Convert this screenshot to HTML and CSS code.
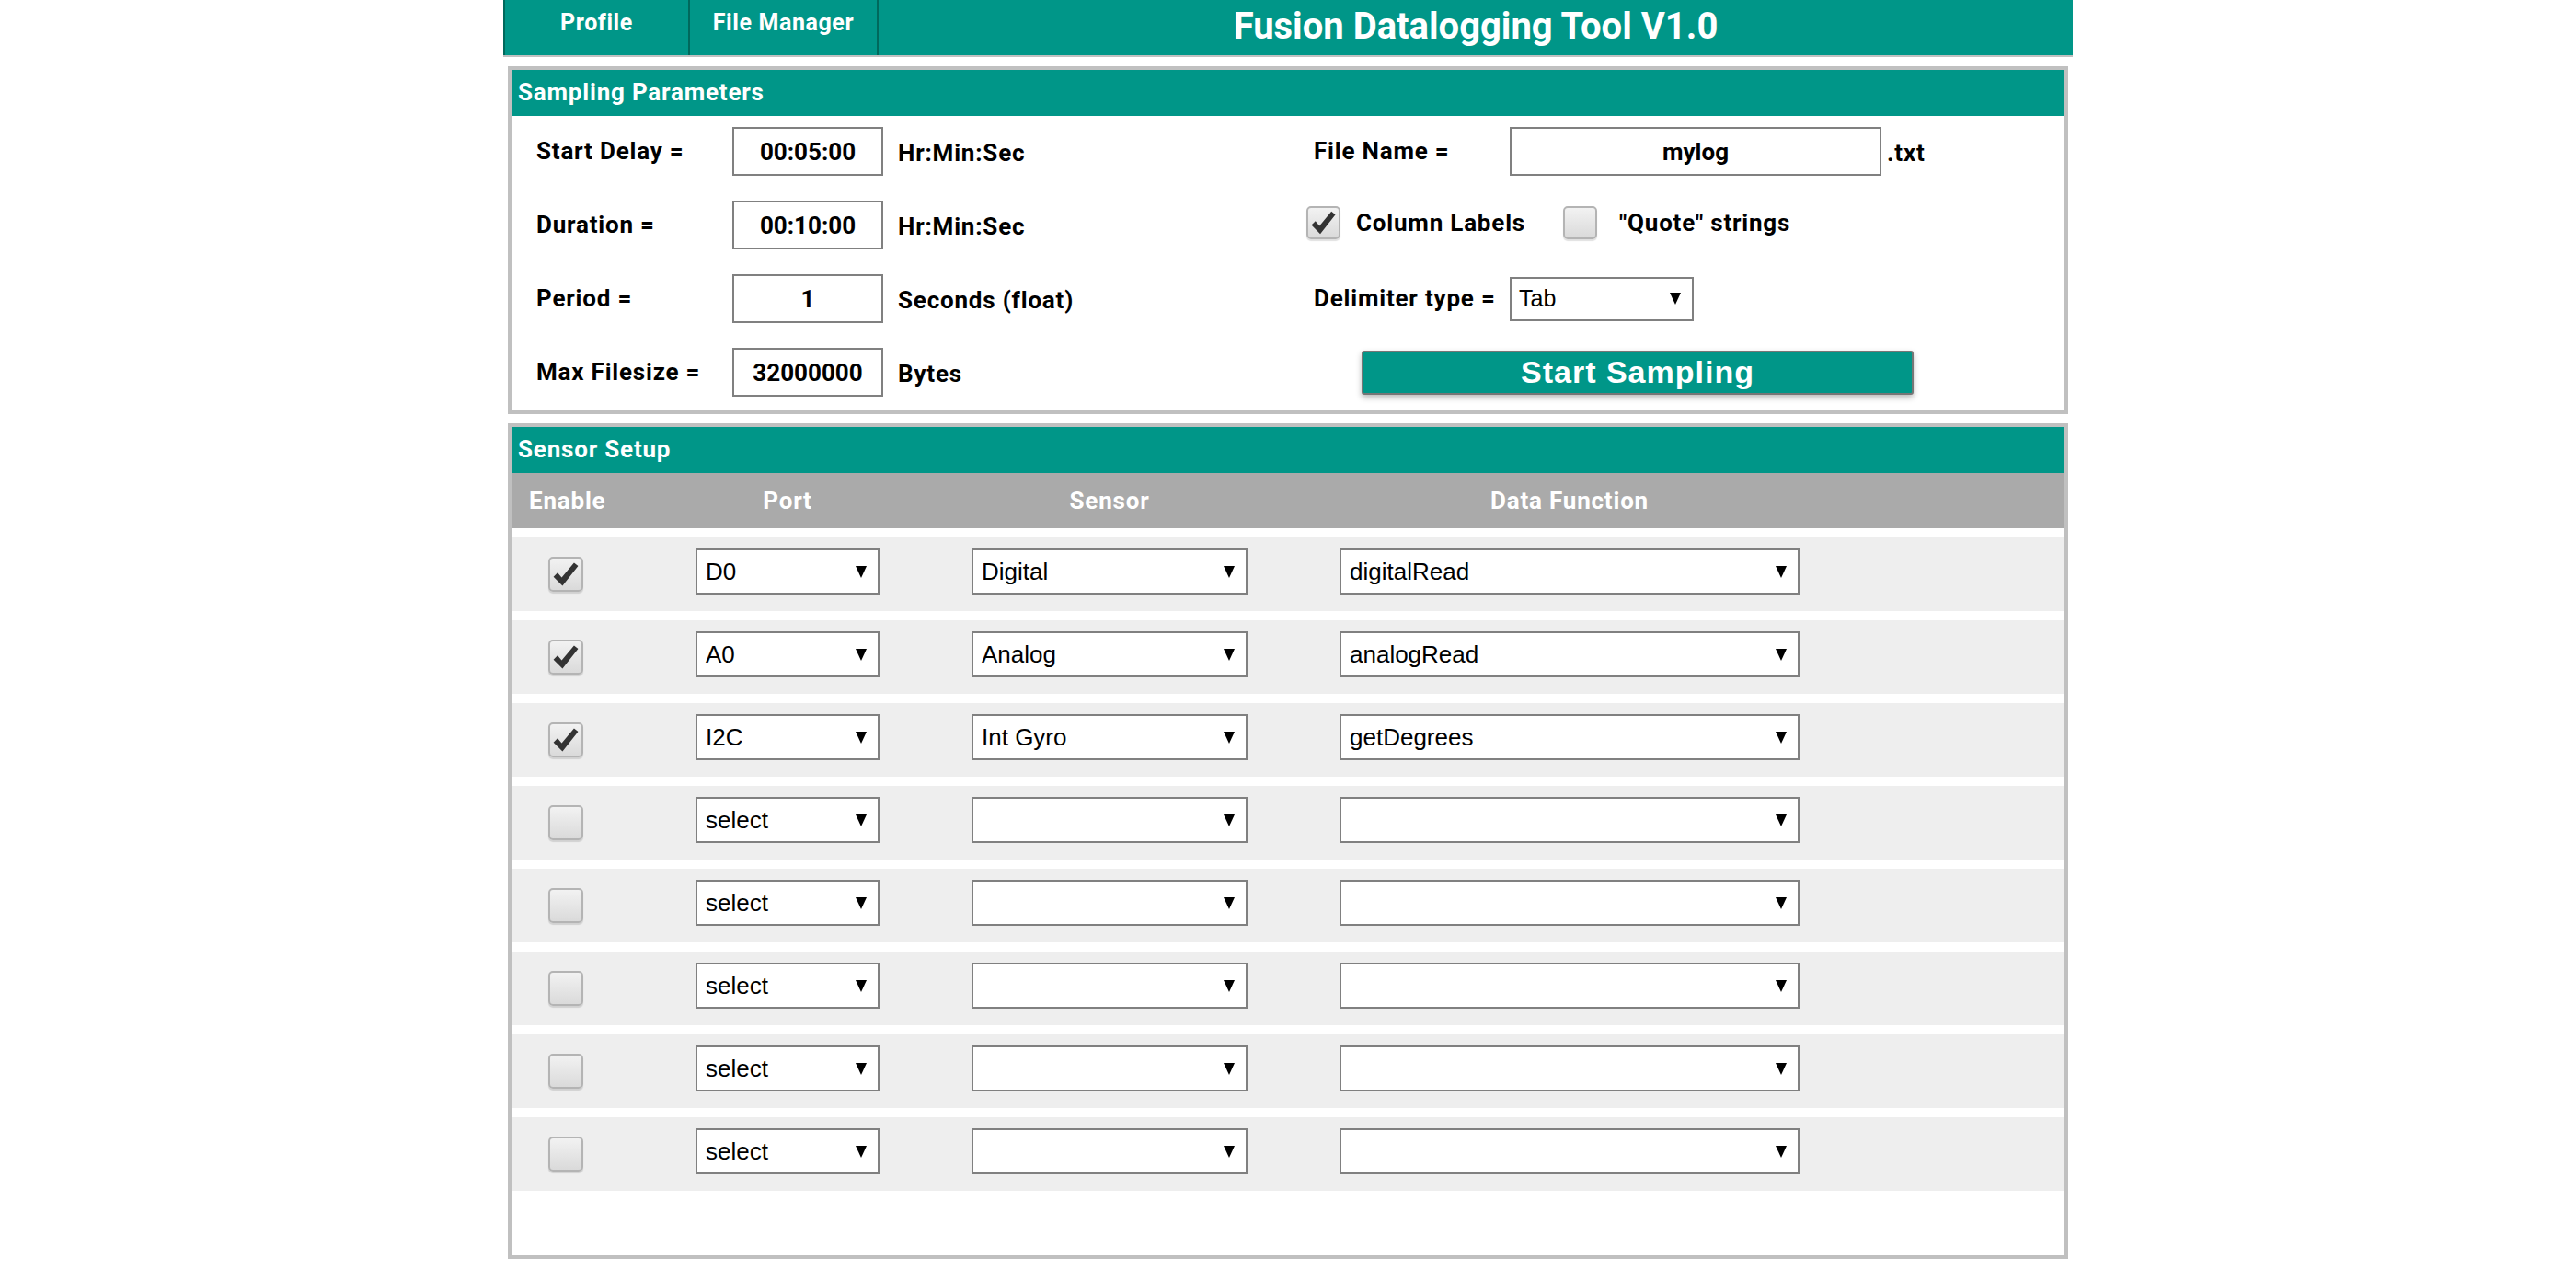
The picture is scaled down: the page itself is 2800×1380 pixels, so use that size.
FILE: index.html
```html
<!DOCTYPE html>
<html lang="en">
<head>
<meta charset="utf-8">
<title>Fusion Datalogging Tool V1.0</title>
<link rel="stylesheet" href="styles.css">
</head>
<body>
<div class="app">
  <header class="topbar">
    <div class="tab tab-first">Profile</div>
    <div class="tab tab-second">File Manager</div>
    <h1 class="title">Fusion Datalogging Tool V1.0</h1>
  </header>

  <section class="panel">
    <h2 class="panel-title">Sampling Parameters</h2>
    <div class="params">
      <div class="field"><span class="lbl">Start Delay =</span><input class="inp" value="00:05:00" readonly><span class="unit">Hr:Min:Sec</span></div>
      <div class="field"><span class="lbl">File Name =</span><input class="inp inp-file" value="mylog" readonly><span class="ext">.txt</span></div>

      <div class="field"><span class="lbl">Duration =</span><input class="inp" value="00:10:00" readonly><span class="unit">Hr:Min:Sec</span></div>
      <div class="field field-checks">
        <span class="cb cb-sm checked"><svg viewBox="0 0 38 38"><path d="M4 22 L9 17 L14 23 L29 5 L34 9 L15 33 Z"/></svg></span>
        <span class="check-lbl">Column Labels</span>
        <span class="cb cb-sm cb-quote"></span>
        <span class="check-lbl check-quote">"Quote" strings</span>
      </div>

      <div class="field"><span class="lbl">Period =</span><input class="inp" value="1" readonly><span class="unit">Seconds (float)</span></div>
      <div class="field"><span class="lbl">Delimiter type =</span><div class="sel sel-delim"><span>Tab</span><svg class="arr" viewBox="0 0 12 13"><path d="M0 0 H12 L6 13 Z"/></svg></div></div>

      <div class="field"><span class="lbl">Max Filesize =</span><input class="inp" value="32000000" readonly><span class="unit">Bytes</span></div>
      <div class="field"><button class="start-btn" type="button">Start Sampling</button></div>
    </div>
  </section>

  <section class="panel">
    <h2 class="panel-title">Sensor Setup</h2>
    <div class="col-head">
      <span class="hd hd-enable">Enable</span>
      <span class="hd">Port</span>
      <span class="hd">Sensor</span>
      <span class="hd">Data Function</span>
    </div>
    <div class="rows">
      <div class="srow">
        <span class="cb checked"><svg viewBox="0 0 38 38"><path d="M4 22 L9 17 L14 23 L29 5 L34 9 L15 33 Z"/></svg></span>
        <div class="sel sel-port"><span>D0</span><svg class="arr" viewBox="0 0 12 13"><path d="M0 0 H12 L6 13 Z"/></svg></div>
        <div class="sel sel-sensor"><span>Digital</span><svg class="arr" viewBox="0 0 12 13"><path d="M0 0 H12 L6 13 Z"/></svg></div>
        <div class="sel sel-func"><span>digitalRead</span><svg class="arr" viewBox="0 0 12 13"><path d="M0 0 H12 L6 13 Z"/></svg></div>
      </div>
      <div class="srow">
        <span class="cb checked"><svg viewBox="0 0 38 38"><path d="M4 22 L9 17 L14 23 L29 5 L34 9 L15 33 Z"/></svg></span>
        <div class="sel sel-port"><span>A0</span><svg class="arr" viewBox="0 0 12 13"><path d="M0 0 H12 L6 13 Z"/></svg></div>
        <div class="sel sel-sensor"><span>Analog</span><svg class="arr" viewBox="0 0 12 13"><path d="M0 0 H12 L6 13 Z"/></svg></div>
        <div class="sel sel-func"><span>analogRead</span><svg class="arr" viewBox="0 0 12 13"><path d="M0 0 H12 L6 13 Z"/></svg></div>
      </div>
      <div class="srow">
        <span class="cb checked"><svg viewBox="0 0 38 38"><path d="M4 22 L9 17 L14 23 L29 5 L34 9 L15 33 Z"/></svg></span>
        <div class="sel sel-port"><span>I2C</span><svg class="arr" viewBox="0 0 12 13"><path d="M0 0 H12 L6 13 Z"/></svg></div>
        <div class="sel sel-sensor"><span>Int Gyro</span><svg class="arr" viewBox="0 0 12 13"><path d="M0 0 H12 L6 13 Z"/></svg></div>
        <div class="sel sel-func"><span>getDegrees</span><svg class="arr" viewBox="0 0 12 13"><path d="M0 0 H12 L6 13 Z"/></svg></div>
      </div>
      <div class="srow">
        <span class="cb"></span>
        <div class="sel sel-port"><span>select</span><svg class="arr" viewBox="0 0 12 13"><path d="M0 0 H12 L6 13 Z"/></svg></div>
        <div class="sel sel-sensor"><span></span><svg class="arr" viewBox="0 0 12 13"><path d="M0 0 H12 L6 13 Z"/></svg></div>
        <div class="sel sel-func"><span></span><svg class="arr" viewBox="0 0 12 13"><path d="M0 0 H12 L6 13 Z"/></svg></div>
      </div>
      <div class="srow">
        <span class="cb"></span>
        <div class="sel sel-port"><span>select</span><svg class="arr" viewBox="0 0 12 13"><path d="M0 0 H12 L6 13 Z"/></svg></div>
        <div class="sel sel-sensor"><span></span><svg class="arr" viewBox="0 0 12 13"><path d="M0 0 H12 L6 13 Z"/></svg></div>
        <div class="sel sel-func"><span></span><svg class="arr" viewBox="0 0 12 13"><path d="M0 0 H12 L6 13 Z"/></svg></div>
      </div>
      <div class="srow">
        <span class="cb"></span>
        <div class="sel sel-port"><span>select</span><svg class="arr" viewBox="0 0 12 13"><path d="M0 0 H12 L6 13 Z"/></svg></div>
        <div class="sel sel-sensor"><span></span><svg class="arr" viewBox="0 0 12 13"><path d="M0 0 H12 L6 13 Z"/></svg></div>
        <div class="sel sel-func"><span></span><svg class="arr" viewBox="0 0 12 13"><path d="M0 0 H12 L6 13 Z"/></svg></div>
      </div>
      <div class="srow">
        <span class="cb"></span>
        <div class="sel sel-port"><span>select</span><svg class="arr" viewBox="0 0 12 13"><path d="M0 0 H12 L6 13 Z"/></svg></div>
        <div class="sel sel-sensor"><span></span><svg class="arr" viewBox="0 0 12 13"><path d="M0 0 H12 L6 13 Z"/></svg></div>
        <div class="sel sel-func"><span></span><svg class="arr" viewBox="0 0 12 13"><path d="M0 0 H12 L6 13 Z"/></svg></div>
      </div>
      <div class="srow">
        <span class="cb"></span>
        <div class="sel sel-port"><span>select</span><svg class="arr" viewBox="0 0 12 13"><path d="M0 0 H12 L6 13 Z"/></svg></div>
        <div class="sel sel-sensor"><span></span><svg class="arr" viewBox="0 0 12 13"><path d="M0 0 H12 L6 13 Z"/></svg></div>
        <div class="sel sel-func"><span></span><svg class="arr" viewBox="0 0 12 13"><path d="M0 0 H12 L6 13 Z"/></svg></div>
      </div>
    </div>
  </section>
</div>
</body>
</html>
```

FILE: styles.css
```css
* { box-sizing: border-box; }

body {
  margin: 0;
  background: #fff;
  font-family: Roboto, "Liberation Sans", sans-serif;
  color: #000;
}

.app {
  width: 1706px;
  margin: 0 auto;
}

/* ---------- top bar ---------- */
.topbar {
  display: flex;
  height: 62px;
  background: #009688;
  border-bottom: 2px solid #c0c0c0;
}

.tab {
  height: 60px;
  padding-top: 10px;
  line-height: 30px;
  font-size: 25px;
  font-weight: 700;
  letter-spacing: 0.6px;
  color: #fff;
  text-align: center;
  border-right: 2px solid #00695c;
}

.tab-first {
  width: 203px;
  border-left: 2px solid #00695c;
}

.tab-second {
  width: 205px;
}

.title {
  flex: 1;
  margin: 0;
  padding-top: 5px;
  line-height: 48px;
  font-size: 40px;
  font-weight: 700;
  color: #fff;
  text-align: center;
}

/* ---------- panels ---------- */
.panel {
  margin: 10px 5px 0;
  border: 4px solid #c0c0c0;
}

.panel-title {
  margin: 0;
  height: 50px;
  padding-left: 7px;
  line-height: 48px;
  font-size: 26px;
  font-weight: 700;
  letter-spacing: 0.8px;
  color: #fff;
  background: #009688;
}

/* ---------- sampling parameters ---------- */
.params {
  display: grid;
  grid-template-columns: 845px 1fr;
  grid-auto-rows: 53px;
  row-gap: 27px;
  padding: 12px 0 15px 27px;
}

.field {
  display: flex;
  align-items: center;
  font-size: 26px;
  font-weight: 700;
  letter-spacing: 0.8px;
}

.lbl {
  flex: none;
  width: 213px;
  margin-top: -2px;
}

.inp {
  width: 164px;
  height: 53px;
  padding: 0;
  border: 2px solid #808080;
  font-family: Roboto, "Liberation Sans", sans-serif;
  font-size: 26px;
  font-weight: 700;
  letter-spacing: 0;
  color: #000;
  text-align: center;
  background: #fff;
  outline: none;
}

.inp-file {
  width: 404px;
}

.unit {
  margin-left: 16px;
  margin-top: 3px;
}

.ext {
  margin-left: 6px;
  margin-top: 3px;
}

.field-checks {
  margin-left: -8px;
  margin-top: -6px;
}

.cb {
  flex: none;
  display: flex;
  align-items: center;
  justify-content: center;
  width: 38px;
  height: 38px;
  border: 2px solid #b4b4b4;
  border-radius: 5px;
  background: linear-gradient(#f2f2f2, #dadada);
  box-shadow: 0 2px 1px rgba(0, 0, 0, 0.12);
}

.cb svg {
  width: 34px;
  height: 34px;
  fill: #333;
}

.cb-sm {
  width: 37px;
  height: 36px;
}

.check-lbl {
  margin-left: 17px;
}

.cb-quote {
  margin-left: 41px;
}

.check-quote {
  margin-left: 24px;
}

.sel {
  flex: none;
  display: flex;
  align-items: center;
  justify-content: space-between;
  height: 50px;
  padding: 0 12px 0 9px;
  border: 2px solid #808080;
  background: #fff;
  font-family: "Liberation Sans", Arial, sans-serif;
  font-size: 26px;
  font-weight: 400;
  letter-spacing: 0;
  color: #000;
}

.arr {
  flex: none;
  width: 12px;
  height: 13px;
  fill: #000;
}

.sel-delim {
  width: 200px;
  height: 48px;
  padding-left: 8px;
  font-size: 25px;
}

.start-btn {
  margin-left: 52px;
  width: 600px;
  height: 48px;
  padding: 0;
  border: 2px solid #767676;
  border-radius: 3px;
  background: #009688;
  box-shadow: 0 3px 6px rgba(0, 0, 0, 0.28);
  font-family: "Liberation Sans", Arial, sans-serif;
  font-size: 34px;
  font-weight: 700;
  letter-spacing: 1px;
  color: #fff;
}

/* ---------- sensor setup ---------- */
.col-head,
.srow {
  display: grid;
  grid-template-columns: 100px 200px 300px 500px;
  column-gap: 100px;
  align-items: center;
}

.col-head {
  height: 60px;
  background: #aaaaaa;
  font-size: 26px;
  font-weight: 700;
  letter-spacing: 0.8px;
  color: #fff;
}

.hd {
  text-align: center;
}

.hd-enable {
  text-align: left;
  padding-left: 19px;
  white-space: nowrap;
}

.rows {
  display: flex;
  flex-direction: column;
  gap: 10px;
  padding: 10px 0 70px;
}

.srow {
  height: 80px;
  background: #eeeeee;
}

.srow .cb {
  margin-left: 40px;
}

.srow .sel {
  margin-bottom: 6px;
}
```
